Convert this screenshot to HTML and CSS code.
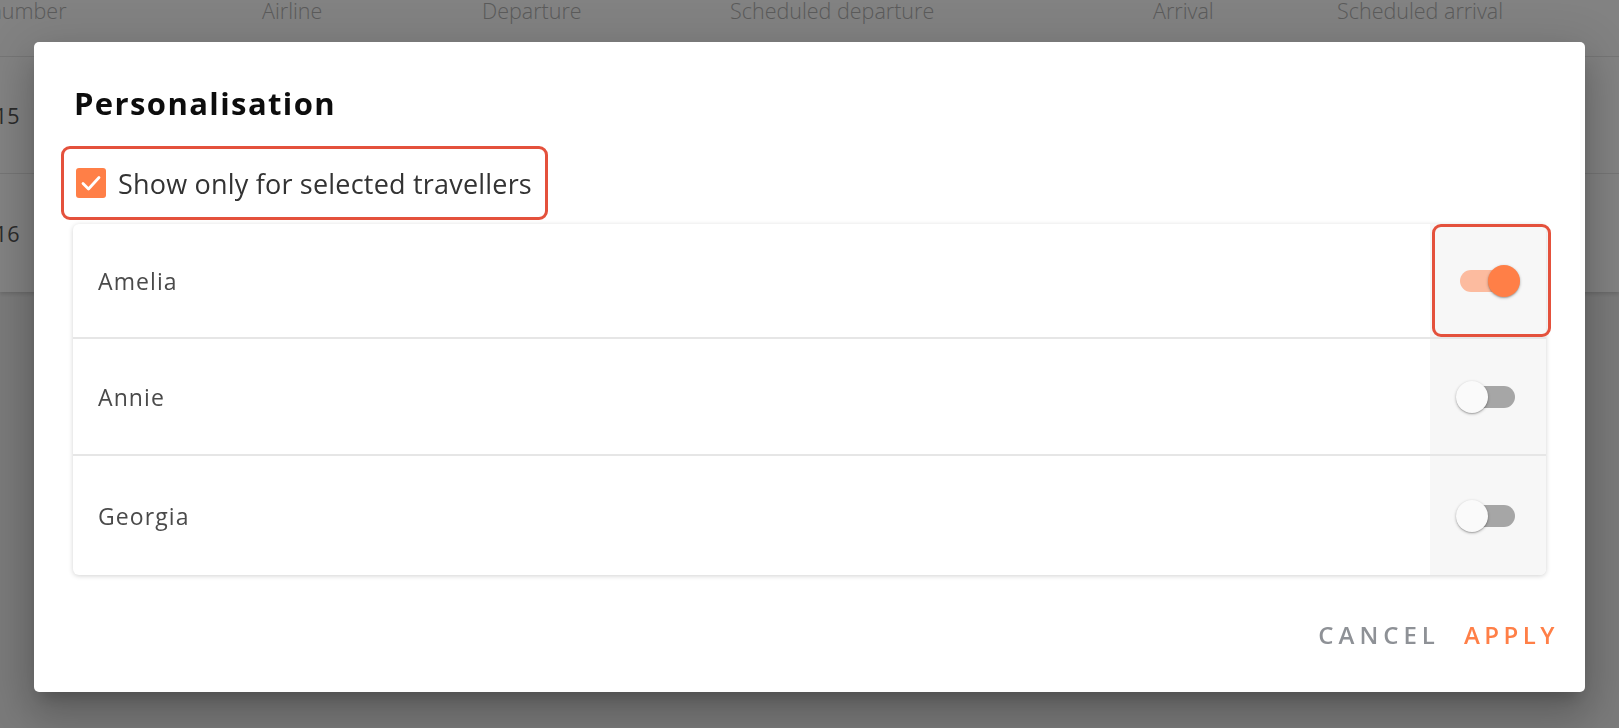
FILE: index.html
```html
<!DOCTYPE html>
<html lang="en">
<head>
<meta charset="utf-8">
<title>Personalisation</title>
<link rel="stylesheet" href="styles.css">
</head>
<body>
<div class="page">
  <div class="flights">
    <div class="flights-head">
      <div class="cell first">Flight number</div>
      <div class="cell">Airline</div>
      <div class="cell">Departure</div>
      <div class="cell">Scheduled departure</div>
      <div class="cell">Arrival</div>
      <div class="cell">Scheduled arrival</div>
    </div>
    <div class="flights-row">
      <div class="cell first">AF 1015</div>
      <div class="cell"></div><div class="cell"></div><div class="cell"></div><div class="cell"></div><div class="cell"></div>
    </div>
    <div class="flights-row">
      <div class="cell first">AF 1016</div>
      <div class="cell"></div><div class="cell"></div><div class="cell"></div><div class="cell"></div><div class="cell"></div>
    </div>
  </div>
</div>

<div class="overlay"></div>

<div class="dialog" role="dialog" aria-labelledby="dlg-title">
  <h2 class="dialog-title" id="dlg-title">Personalisation</h2>

  <label class="check-row highlight">
    <span class="checkbox">
      <svg viewBox="0 0 30 30" width="30" height="30" aria-hidden="true"><path d="M7 15.5 L12.5 21 L23 9.5" fill="none" stroke="#fff" stroke-width="2.8" stroke-linecap="round" stroke-linejoin="round"/></svg>
    </span>
    <span class="check-label">Show only for selected travellers</span>
  </label>

  <div class="travellers">
    <div class="traveller">
      <div class="name">Amelia</div>
      <div class="switch-cell">
        <span class="switch on"><span class="track"></span><span class="thumb"></span></span>
        <span class="switch-highlight"></span>
      </div>
    </div>
    <div class="traveller">
      <div class="name">Annie</div>
      <div class="switch-cell">
        <span class="switch"><span class="track"></span><span class="thumb"></span></span>
      </div>
    </div>
    <div class="traveller">
      <div class="name">Georgia</div>
      <div class="switch-cell">
        <span class="switch"><span class="track"></span><span class="thumb"></span></span>
      </div>
    </div>
  </div>

  <div class="actions">
    <button class="btn btn-cancel" type="button">Cancel</button>
    <button class="btn btn-apply" type="button">Apply</button>
  </div>
</div>
</body>
</html>
```
FILE: styles.css
```css
html, body {
  margin: 0;
  padding: 0;
}
body {
  width: 1619px;
  height: 728px;
  overflow: hidden;
  background: #f0f0f0;
  font-family: "Open Sans", "Liberation Sans", sans-serif;
}

/* background page */
.page {
  height: 728px;
}
.flights {
  background: #ffffff;
  box-shadow: 0 2px 4px rgba(0,0,0,0.15);
  height: 292px;
  display: flex;
  flex-direction: column;
}
.flights-head,
.flights-row {
  display: grid;
  grid-template-columns: 322px 220px 248px 423px 184px 1fr;
  margin-left: -60px;
  border-bottom: 1px solid #e6e6e6;
}
.flights-head {
  height: 56px;
  font-weight: 300;
  font-size: 21.5px;
  line-height: 22px;
  color: #b2b2b2;
}
.flights-head .cell.first {
  margin-left: -8px;
}
.flights-row {
  height: 116px;
  align-items: center;
  font-size: 21.5px;
  color: #555;
}
.flights-row .cell.first {
  margin-left: 0;
}
.flights-row:last-child {
  border-bottom: none;
  flex: 1;
}

.overlay {
  position: fixed;
  inset: 0;
  background: rgba(0,0,0,0.49);
}

/* dialog */
.dialog {
  position: absolute;
  left: 34px;
  top: 42px;
  width: 1551px;
  box-sizing: border-box;
  padding: 44px 39px 40px 39px;
  background: #ffffff;
  border-radius: 5px;
  box-shadow: 0 11px 15px -7px rgba(0,0,0,0.2), 0 24px 38px 3px rgba(0,0,0,0.14), 0 9px 46px 8px rgba(0,0,0,0.12);
  display: flex;
  flex-direction: column;
  font-family: "Open Sans", "Liberation Sans", sans-serif;
}
.dialog-title {
  margin: 0;
  padding-left: 1px;
  font-size: 31px;
  line-height: 34px;
  font-weight: 700;
  letter-spacing: 1.4px;
  color: #0d0d0d;
}

.check-row {
  margin-top: 26px;
  align-self: flex-start;
  display: flex;
  align-items: center;
  gap: 12px;
  height: 68px;
  padding: 0 13px 0 12px;
  margin-left: -12px;
  box-sizing: content-box;
}
.highlight {
  border: 3px solid #e4513c;
  border-radius: 9px;
}
.checkbox {
  width: 30px;
  height: 30px;
  border-radius: 3px;
  background: #ff7f47;
  display: flex;
}
.check-label {
  font-size: 27px;
  letter-spacing: 0.2px;
  color: #333;
}

.travellers {
  margin-top: 4px;
  background: #fff;
  border-radius: 6px;
  box-shadow: 0 1px 5px rgba(0,0,0,0.18);
  display: flex;
  flex-direction: column;
}
.traveller {
  box-sizing: border-box;
  display: flex;
  height: 117px;
  border-bottom: 2px solid #e6e6e6;
}
.traveller:first-child { height: 115px; }
.traveller:last-child {
  border-bottom: none;
  height: 119px;
}
.name {
  flex: 1;
  display: flex;
  align-items: center;
  padding-left: 25px;
  font-size: 23px;
  letter-spacing: 1.1px;
  color: #4a4a4a;
}
.switch-cell {
  position: relative;
  width: 116px;
  background: #f7f7f7;
  display: flex;
  align-items: center;
  justify-content: center;
}
.traveller:last-child .switch-cell { border-bottom-right-radius: 6px; }
.traveller:first-child .switch-cell { border-top-right-radius: 6px; }

.switch {
  position: relative;
  width: 64px;
  height: 32px;
  display: block;
}
.switch .track {
  position: absolute;
  left: 4px;
  right: 5px;
  top: 5px;
  height: 22px;
  border-radius: 11px;
  background: #a6a6a6;
}
.switch .thumb {
  position: absolute;
  left: 0;
  top: 0;
  width: 32px;
  height: 32px;
  border-radius: 50%;
  background: #fafafa;
  box-shadow: 0 1px 3px rgba(0,0,0,0.3), 0 1px 1px rgba(0,0,0,0.12);
}
.switch.on .track {
  background: #fcbb9f;
}
.switch.on .thumb {
  left: 32px;
  background: #ff7f47;
}
.switch-highlight {
  position: absolute;
  left: 2px;
  right: -5px;
  top: 0;
  bottom: 0;
  border: 3px solid #e4513c;
  border-radius: 9px;
}

.actions {
  margin-top: 41px;
  display: flex;
  justify-content: flex-end;
  gap: 24px;
  margin-right: -13px;
}
.btn {
  border: none;
  background: none;
  padding: 0;
  height: 36px;
  font-family: "Open Sans", "Liberation Sans", sans-serif;
  font-size: 24px;
  font-weight: 600;
  letter-spacing: 4.5px;
  text-transform: uppercase;
  cursor: pointer;
}
.btn-cancel { color: #8e9196; letter-spacing: 5px; }
.btn-apply { color: #ff7f47; }
```
